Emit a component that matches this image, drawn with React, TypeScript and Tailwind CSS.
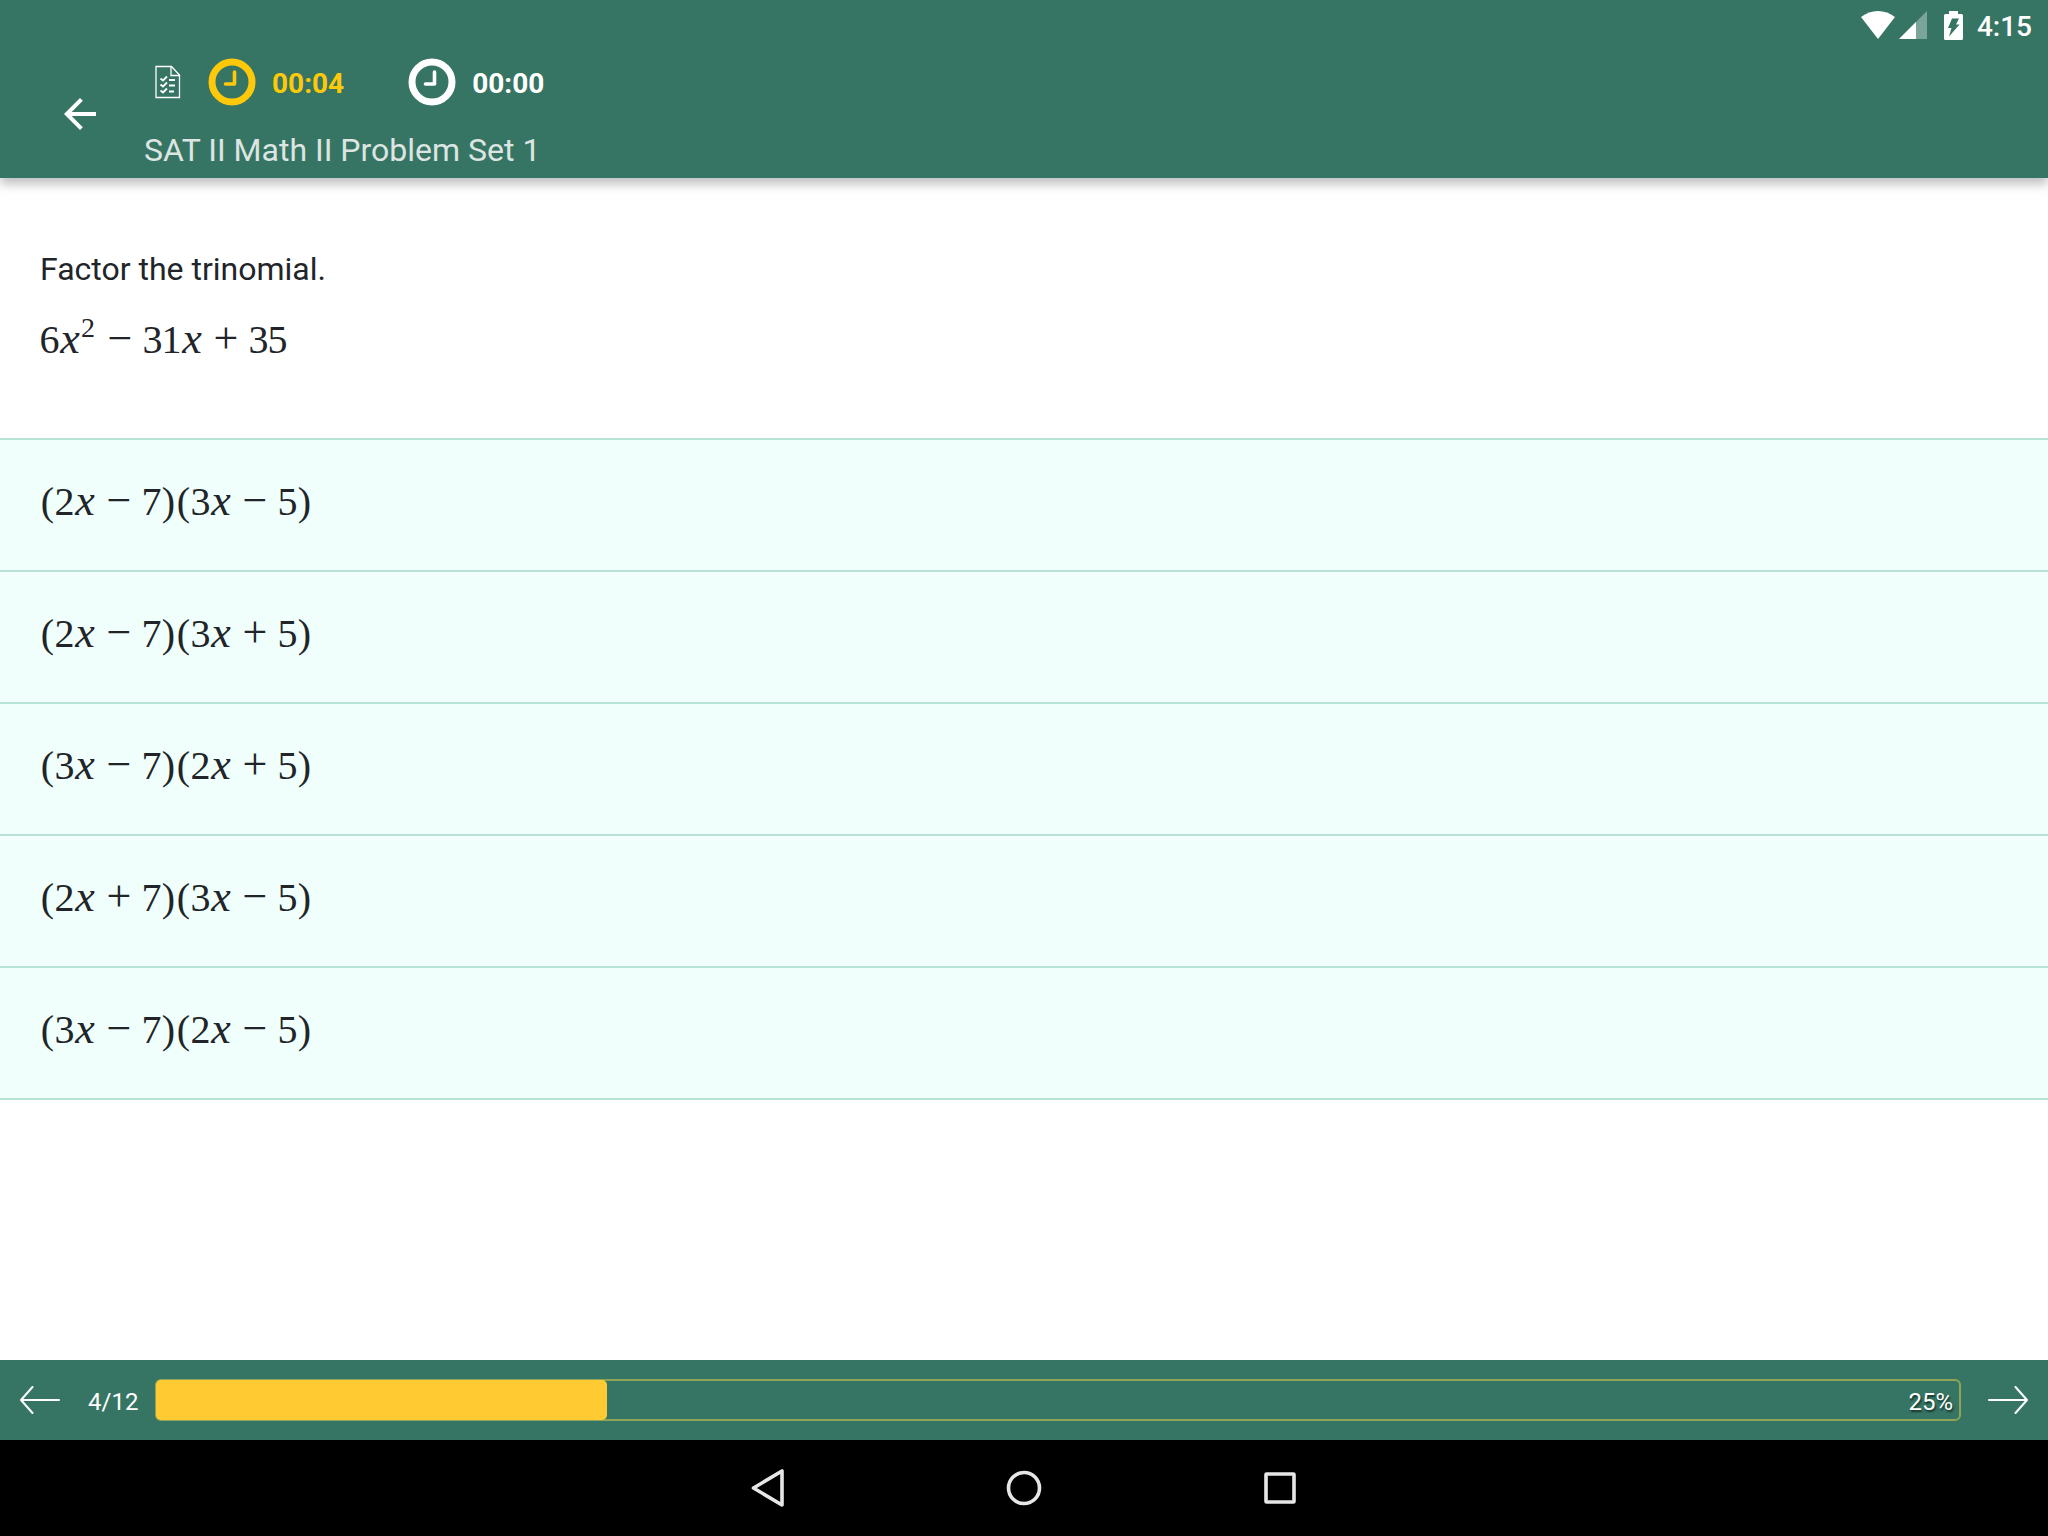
import clsx from "clsx";

const answers = [
  "(2x−7)(3x−5)",
  "(2x−7)(3x+5)",
  "(3x−7)(2x+5)",
  "(2x+7)(3x−5)",
  "(3x−7)(2x−5)",
];

const progress = { current: 4, total: 12, percent: 25 };

export default function App() {
  return (
    <div className="flex min-h-screen flex-col bg-white font-['Roboto',sans-serif] text-[#212529]">
      <Header />

      <main className="flex-1">
        <section className="px-10 pt-[68px] pb-16">
          <p className="text-[32px] leading-[46px]">Factor the trinomial.</p>
          <p className="mt-5 flex h-[62px]">
            <MathText value="6x^2−31x+35" />
          </p>
        </section>

        <ul className="border-t-2 border-[#b8e2d4]">
          {answers.map((answer) => (
            <li key={answer} className="border-b-2 border-[#b8e2d4]">
              <button
                type="button"
                className="flex h-[130px] w-full items-center bg-[#f0fffb] px-10 pb-2 text-left"
              >
                <MathText value={answer} />
              </button>
            </li>
          ))}
        </ul>
      </main>

      <ProgressFooter />
      <SystemNav />
    </div>
  );
}

function Header() {
  return (
    <header className="relative flex h-[178px] flex-col bg-[#367563] text-white shadow-[0_6px_10px_rgba(0,0,0,0.26)]">
      <div className="flex h-[50px] items-center justify-end pr-4">
        <svg viewBox="0 0 34 28" className="h-7 w-[34px]" fill="currentColor">
          <path d="M17 28 0 6C5 2 11 0 17 0s12 2 17 6Z" />
        </svg>
        <svg viewBox="0 0 28 28" className="ml-1 size-7" fill="currentColor">
          <path d="M28 0v28H0Z" opacity="0.35" />
          <path d="M17 11v17H0Z" />
        </svg>
        <svg viewBox="0 0 19 29" className="ml-[17px] h-[29px] w-[19px]">
          <path
            fill="currentColor"
            d="M5 0h9v3h3.500A1.500 1.500 0 0 1 19 4.500V27.500A1.500 1.500 0 0 1 17.500 29h-16A1.500 1.500 0 0 1 0 27.500v-23A1.500 1.500 0 0 1 1.500 3H5Z"
          />
          <path fill="#367563" d="M8 7.500h7L12 13.500h3.500L5 25.500 7.500 17H4Z" />
        </svg>
        <span className="ml-[14px] pt-1 text-[28px] leading-8 font-medium">4:15</span>
      </div>

      <div className="flex flex-1">
        <button
          type="button"
          aria-label="Back"
          className="mt-10 ml-14 flex size-12 items-center justify-center"
        >
          <svg viewBox="0 0 24 24" className="size-12" fill="currentColor">
            <path d="M20 11H7.830l5.590-5.590L12 4l-8 8 8 8 1.410-1.410L7.830 13H20v-2z" />
          </svg>
        </button>

        <div className="ml-10">
          <div className="flex h-16 items-center">
            <ChecklistIcon />
            <Timer time="00:04" className="ml-[27px] text-[#fdc90a]" />
            <Timer time="00:00" className="ml-16" />
          </div>
          <h1 className="mt-4 text-[32px] leading-10 text-[#dde5e2]">
            SAT II Math II Problem Set 1
          </h1>
        </div>
      </div>
    </header>
  );
}

function Timer({ time, className }: { time: string; className?: string }) {
  return (
    <div className={clsx("flex items-center", className)}>
      <svg viewBox="0 0 48 48" className="size-12" fill="none" stroke="currentColor">
        <circle cx="24" cy="24" r="20" strokeWidth="7" />
        <path
          d="M26.500 14v12H17.500"
          strokeWidth="3.600"
          strokeLinecap="round"
          strokeLinejoin="round"
        />
      </svg>
      <span className="ml-4 pt-1 text-[28px] leading-8 font-bold">{time}</span>
    </div>
  );
}

function ChecklistIcon() {
  return (
    <svg
      viewBox="0 0 26 34"
      className="ml-[11px] h-[34px] w-[26px]"
      fill="none"
      stroke="currentColor"
      strokeWidth="1.300"
    >
      <path d="M1 1.500h15.500L24.500 10V32.500H1Z" />
      <path d="M16 1.500v9h8.500" />
      <path
        d="M5.500 13.500l2.500 2 4-4M5.500 19.500l2.500 2 4-4M5.500 25.500l2.500 2 4-4M14 15h6M14 20.500h6M14 26.500h5"
        strokeWidth="1.800"
      />
    </svg>
  );
}

// One cell per character, with italic variables and wide binary operators.
function MathText({ value }: { value: string }) {
  const chars = value.match(/\^?./g) ?? [];

  return (
    <span className="inline-flex items-baseline font-['Liberation_Serif',serif] text-[40px] leading-[54px]">
      {chars.map((char, index) => {
        if (char.startsWith("^")) {
          return (
            <sup key={index} className="-top-4 w-4 text-[28px] leading-8">
              {char.slice(1)}
            </sup>
          );
        }

        return (
          <span
            key={index}
            className={clsx(
              "flex justify-center",
              /\d/.test(char) && "w-[19px]",
              /[()]/.test(char) && "w-[15px]",
              /[+−]/.test(char) && "w-[46px] text-[44px]",
              char === "x" && "w-[22px] text-[44px] italic",
            )}
          >
            {char}
          </span>
        );
      })}
    </span>
  );
}

function ProgressFooter() {
  return (
    <footer className="flex h-20 items-center bg-[#367563] px-5 text-2xl text-white">
      <button type="button" aria-label="Previous question">
        <LongArrow />
      </button>
      <span className="ml-7 w-[67px] pt-1">
        {progress.current}/{progress.total}
      </span>
      <div className="relative h-[42px] flex-1 rounded-md border-2 border-[#8fa457]">
        <div
          className="absolute -inset-y-px -left-px rounded-[5px] bg-[#ffca32]"
          style={{ width: `${progress.percent}%` }}
        />
        <span className="absolute inset-y-0 right-[6px] flex items-center pt-1 [text-shadow:1px_2px_2px_rgba(0,0,0,0.6)]">
          {progress.percent}%
        </span>
      </div>
      <button type="button" aria-label="Next question" className="ml-[27px]">
        <LongArrow className="rotate-180" />
      </button>
    </footer>
  );
}

function LongArrow({ className }: { className?: string }) {
  return (
    <svg
      viewBox="0 0 40 28"
      className={clsx("h-7 w-10", className)}
      fill="none"
      stroke="currentColor"
      strokeWidth="2"
      strokeLinecap="round"
      strokeLinejoin="round"
    >
      <path d="M39 14H1M12.500 1 1 14l11.500 13" />
    </svg>
  );
}

function SystemNav() {
  return (
    <nav className="flex h-24 items-center justify-center gap-52 bg-black text-[#e6e6e6]">
      <button type="button" aria-label="Back">
        <NavIcon>
          <path d="M38 7v34L9.500 24Z" />
        </NavIcon>
      </button>
      <button type="button" aria-label="Home">
        <NavIcon>
          <circle cx="24" cy="24" r="15.500" />
        </NavIcon>
      </button>
      <button type="button" aria-label="Recent apps">
        <NavIcon>
          <rect x="10" y="10" width="28" height="28" rx="0.500" />
        </NavIcon>
      </button>
    </nav>
  );
}

function NavIcon({ children }: { children: React.ReactNode }) {
  return (
    <svg
      viewBox="0 0 48 48"
      className="size-12"
      fill="none"
      stroke="currentColor"
      strokeWidth="3.600"
      strokeLinejoin="round"
    >
      {children}
    </svg>
  );
}
